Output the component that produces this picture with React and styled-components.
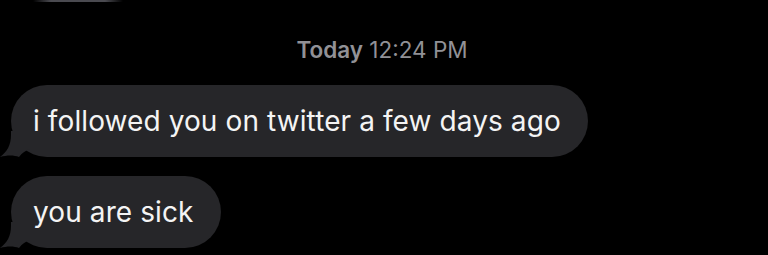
import React from "react";
import styled, { createGlobalStyle } from "styled-components";

const GlobalStyle = createGlobalStyle`
  html, body {
    margin: 0;
    padding: 0;
    background: #000000;
  }
  body {
    width: 768px;
    height: 255px;
    overflow: hidden;
    font-family: Inter, "Liberation Sans", sans-serif;
    -webkit-font-smoothing: antialiased;
  }
`;

const Tail = () => {
    return (
        <svg width="30" height="26" viewBox="0 0 30 26" fill="none" xmlns="http://www.w3.org/2000/svg">
            <path d="M11 0 L30 0 L30 18 C25 20 22 22 19 26 C14 24 7 24 0 26 C7 21 11 14 11 4 Z" fill="#262629" />
        </svg>
    )
}

const messages = [
    "i followed you on twitter a few days ago",
    "you are sick",
];

const App = () => {
    return (
        <Screen>
            <GlobalStyle />
            <PrevEdge />
            <Stamp>
                <strong>Today</strong> 12:24 PM
            </Stamp>
            <Thread>
                {messages.map((text) => (
                    <Row key={text}>
                        <Bubble>
                            {text}
                            <TailWrap>
                                <Tail />
                            </TailWrap>
                        </Bubble>
                    </Row>
                ))}
            </Thread>
        </Screen>
    )
}

export default App;

const Screen = styled.div`
    width: 768px;
    height: 255px;
    background: #000000;
    display: flex;
    flex-direction: column;
`

const PrevEdge = styled.div`
    width: 90px;
    height: 2px;
    margin-left: 33px;
    background: linear-gradient(90deg, rgba(90, 90, 96, 0) 0%, #4a4a50 20%, #4a4a50 80%, rgba(90, 90, 96, 0) 100%);
`

const Stamp = styled.div`
    margin-top: 35px;
    height: 26px;
    line-height: 26px;
    text-align: center;
    font-size: 22.5px;
    color: #919196;
    padding-right: 4px;

    strong {
        font-weight: 600;
    }
`

const Thread = styled.div`
    display: flex;
    flex-direction: column;
    gap: 19px;
    margin-top: 22px;
`

const Row = styled.div`
    display: flex;
    padding-left: 11px;
`

const Bubble = styled.div`
    position: relative;
    height: 72px;
    display: flex;
    align-items: center;
    padding: 0 27px 0 22px;
    border-radius: 36px;
    background: #262629;
    color: #f4f4f4;
    font-size: 28px;
    letter-spacing: 0.1px;
    white-space: nowrap;
`

const TailWrap = styled.div`
    position: absolute;
    left: -11px;
    bottom: 0;
    height: 26px;
    line-height: 0;
`
